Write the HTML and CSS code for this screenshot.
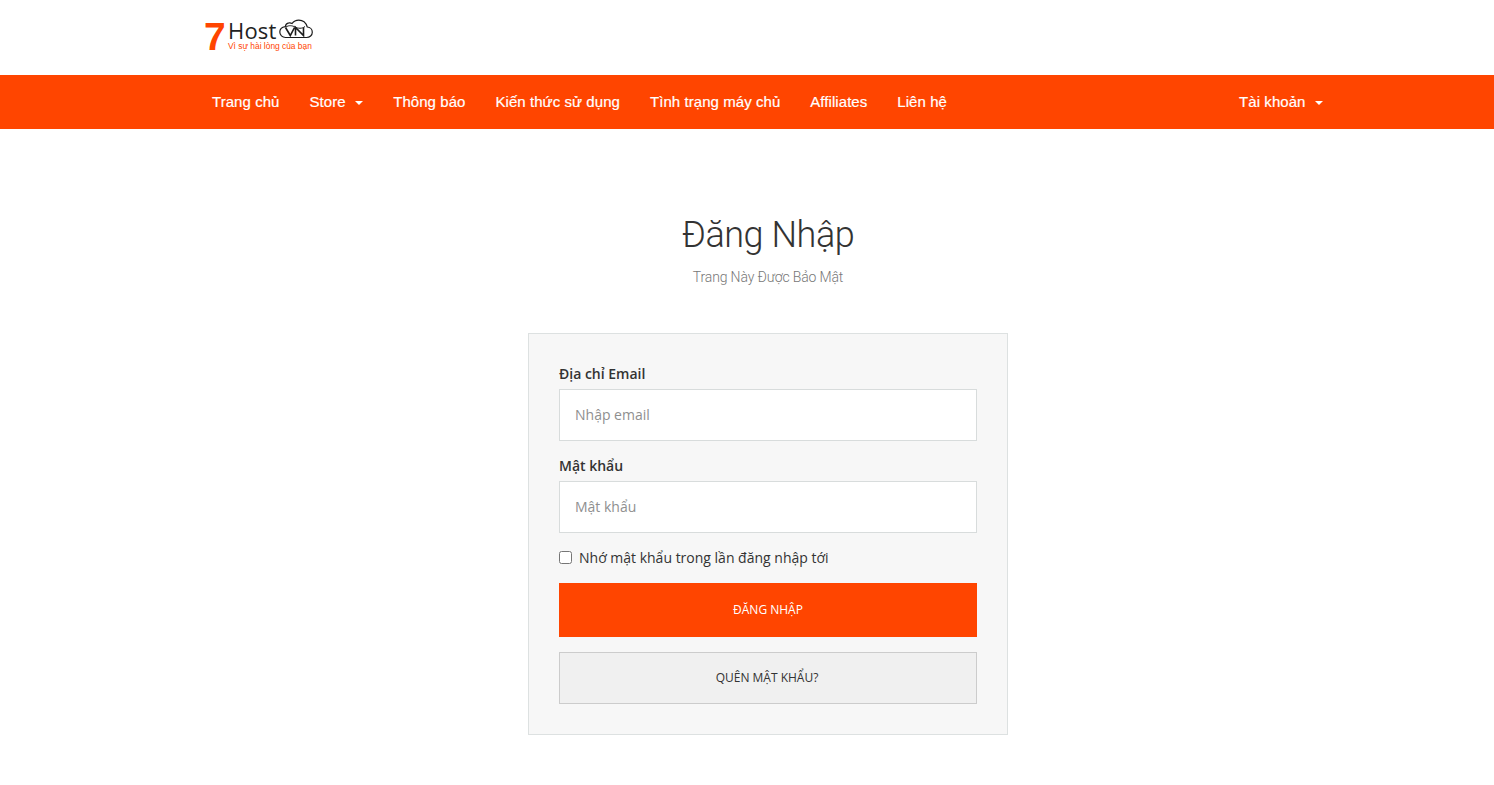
FILE: index.html
```html
<!DOCTYPE html>
<html lang="vi">
<head>
<meta charset="utf-8">
<title>Đăng Nhập</title>
<link rel="stylesheet" href="styles.css">
</head>
<body>
<header class="top">
  <a class="logo" href="#">
    <span class="logo-seven">7</span>
    <span class="logo-text">
      <span class="logo-host">Host</span>
      <span class="logo-tag">Vì sự hài lòng của bạn</span>
    </span>
    <svg class="logo-cloud" width="34" height="20" viewBox="0 0 34 20" fill="none" stroke="#1c1c1c" stroke-width="1.2">
      <path d="M6.500 18.500h21c3.300 0 5.800-2.400 5.800-5.300 0-2.800-2.200-5-5-5.200C27 4 23.500 1.200 19.800 1.200c-2.800 0-5.200 1.200-6.700 3.300-1-.6-2.100-.8-3.200-.6C8 4.200 6.600 5.700 6.300 7.600 3 8 .8 10.200.8 13.100c0 3 2.500 5.400 5.700 5.400z"/>
      <path d="M6.500 8.500l4.800 8 4.200-8M16.500 16.500V8.500l8 8V8.500" stroke-width="1.600"/>
      <path d="M7 8c3-2 6-1.500 9 0s7 2 10-.5" stroke-width="1"/>
    </svg>
  </a>
</header>
<nav class="nav">
  <ul class="nav-list">
    <li><a href="#">Trang chủ</a></li>
    <li><a href="#">Store<span class="caret"></span></a></li>
    <li><a href="#">Thông báo</a></li>
    <li><a href="#">Kiến thức sử dụng</a></li>
    <li><a href="#">Tình trạng máy chủ</a></li>
    <li><a href="#">Affiliates</a></li>
    <li><a href="#">Liên hệ</a></li>
    <li class="nav-right"><a href="#">Tài khoản<span class="caret"></span></a></li>
  </ul>
</nav>
<main class="main">
  <h1 class="title">Đăng Nhập</h1>
  <p class="subtitle">Trang Này Được Bảo Mật</p>
  <form class="card">
    <label class="label" for="email">Địa chỉ Email</label>
    <input class="input" id="email" type="text" placeholder="Nhập email">
    <label class="label" for="pw">Mật khẩu</label>
    <input class="input input-last" id="pw" type="password" placeholder="Mật khẩu">
    <label class="remember"><input class="check" type="checkbox">Nhớ mật khẩu trong lần đăng nhập tới</label>
    <button class="btn btn-primary" type="button">ĐĂNG NHẬP</button>
    <button class="btn btn-default" type="button">QUÊN MẬT KHẨU?</button>
  </form>
</main>
</body>
</html>
```
FILE: styles.css
```css
* { box-sizing: border-box; }
html, body { margin: 0; padding: 0; height: 785px; overflow: hidden; background: #fff; }
body { font-family: "Open Sans", sans-serif; color: #333; font-size: 14px; }
a { text-decoration: none; color: inherit; }

.top { height: 75px; padding: 15px 0 0 204px; }
.logo { display: flex; width: 112px; height: 40px; align-items: flex-start; }
.logo-seven { font: 700 39px/44px "Liberation Sans", sans-serif; color: #ff4500; width: 24px; flex: none; }
.logo-text { display: flex; flex-direction: column; flex: none; width: 51px; white-space: nowrap; }
.logo-host { font: 400 22px/22px "Open Sans", sans-serif; color: #222; letter-spacing: .2px; margin-top: 4px; }
.logo-tag { font: 400 8.400px/11px "Liberation Sans", sans-serif; color: #ff4500; }
.logo-cloud { flex: none; margin-top: 4px; }

.nav { height: 54px; background: #ff4500; }
.nav-list { display: flex; list-style: none; margin: 0; padding: 0 156px 0 197px; height: 100%; }
.nav-list a { display: block; padding: 0 15px; color: #fff; font: 400 15px/54px "Liberation Sans", sans-serif; letter-spacing: .06px; -webkit-text-stroke: .2px #fff; white-space: nowrap; }
.nav-right { margin-left: auto; }
.caret { display: inline-block; width: 0; height: 0; margin-left: 9.500px; vertical-align: middle; border-top: 4px solid #fff; border-left: 4px solid transparent; border-right: 4px solid transparent; }

.main { display: flex; flex-direction: column; align-items: center; padding-left: 42px; }
.title { margin: 84px 0 0; font: 300 36px/44px "Roboto", sans-serif; letter-spacing: -.45px; color: #333; }
.subtitle { margin: 10px 0 0; font: 300 14px/20px "Roboto", sans-serif; letter-spacing: -.15px; color: #777; }
.card { display: flex; flex-direction: column; width: 480px; height: 402px; margin-top: 46px; padding: 30px; background: #f7f7f7; border: 1px solid #dde1e1; }
.label { font-weight: 600; font-size: 14px; line-height: 20px; color: #333; margin-bottom: 5px; }
.input { height: 52px; width: 100%; padding: 0 15px 2px; border: 1px solid #d8dcdc; background: #fff; font: 400 14px "Open Sans", sans-serif; margin-bottom: 15px; border-radius: 0; outline: 0; }
.input-last { margin-bottom: 14px; }
.input::placeholder { color: #8f8f8f; opacity: 1; }
.remember { display: flex; align-items: center; height: 20px; margin-bottom: 16px; color: #333; font-size: 14px; }
.check { width: 13px; height: 13px; margin: 0 7px 0 0; }
.btn { width: 100%; border-radius: 0; padding: 0 0 2px; font: 400 12px "Open Sans", sans-serif; cursor: pointer; }
.btn-primary { height: 54px; background: #ff4500; color: #fff; border: 0; margin-bottom: 15px; font-weight: 500; }
.btn-default { height: 52px; padding-right: 2px; background: #f0f0f0; color: #333; border: 1px solid #ccc; }
```
